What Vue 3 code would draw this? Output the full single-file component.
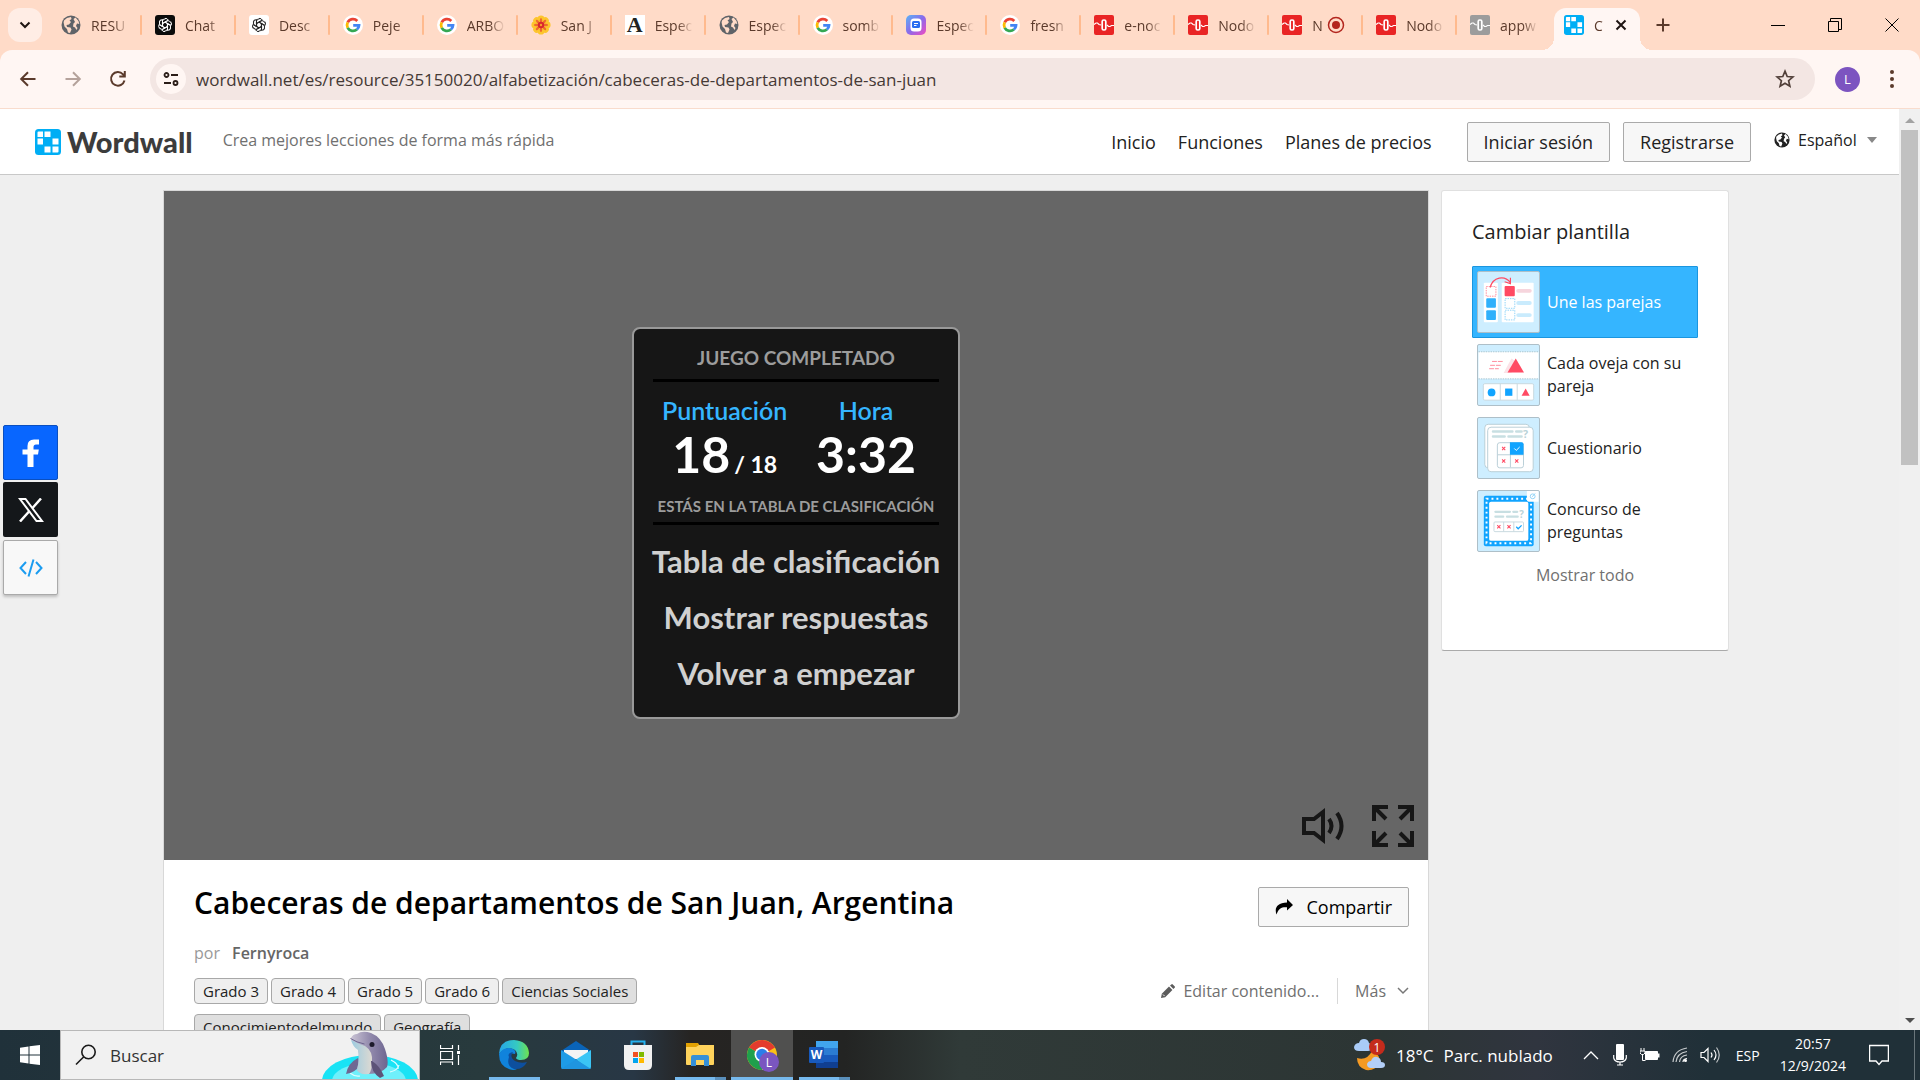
<template>
  <div class="screen">
    <!-- shared symbols -->
    <svg class="symbols" aria-hidden="true">
      <symbol id="i-globe" viewBox="0 0 20 20">
        <circle cx="10" cy="10" r="9.5" fill="currentColor" />
        <path d="M3 5.5 6 3l4-1 .5 2-2 1.500 1.500 1.500-2 2.500-2.500.5.5 2 3.500.5 1 2-1.500 3.500-2-.5-1-3.500-2.500-2.500-.9-4zM12.500 4l2-1.500 3 3.500.8 3-2.300-.5-1 2.500 1.500 2-1 2-1.500-2.500-2-1 .5-3 1.500-1.500z" fill="var(--land, #ffdbc8)" />
      </symbol>
      <symbol id="i-gpt" viewBox="0 0 20 20">
        <rect width="20" height="20" rx="3" fill="var(--tile, #0b0b0b)" />
        <g fill="none" stroke="currentColor" stroke-width="1">
          <path v-for="a in 6" :key="a" :transform="`rotate(${a * 60} 10 10)`" d="M10 7.300 12.600 8.800V13.200a3 3 0 0 1-3.200 3M10 3.400a3.200 3.200 0 0 1 3.300 1.800L9.700 7.300" />
        </g>
      </symbol>
      <symbol id="i-google" viewBox="0 0 20 20">
        <circle cx="10" cy="10" r="10" fill="#fff" />
        <g fill="none" stroke-width="2.800">
          <path d="M14.300 5.900A6 6 0 0 0 4.700 7.300" stroke="#ea4335" />
          <path d="M4.700 7.300a6 6 0 0 0 0 5.500" stroke="#fbbc05" />
          <path d="M4.700 12.800a6 6 0 0 0 9.200 1.700" stroke="#34a853" />
          <path d="M13.900 14.500A6 6 0 0 0 16 10.300H10.200" stroke="#4285f4" />
        </g>
      </symbol>
      <symbol id="i-flower" viewBox="0 0 20 20">
        <g fill="#fdc52c">
          <circle v-for="a in 8" :key="a" :transform="`rotate(${a * 45} 10 10)`" cx="10" cy="3.800" r="3.400" />
        </g>
        <g fill="#ef6a2e">
          <ellipse v-for="a in 8" :key="a" :transform="`rotate(${a * 45} 10 10)`" cx="10" cy="5.500" rx="1.200" ry="2.600" />
        </g>
        <circle cx="10" cy="10" r="3.200" fill="#d9272e" />
        <circle cx="10" cy="10" r="1.200" fill="#f9a02c" />
      </symbol>
      <symbol id="i-app" viewBox="0 0 20 20">
        <linearGradient id="appg" x1="0" y1="0" x2="1" y2="1">
          <stop offset="0" stop-color="#5bb4f5" />
          <stop offset=".5" stop-color="#8a6bea" />
          <stop offset="1" stop-color="#f04bc0" />
        </linearGradient>
        <rect width="20" height="20" rx="5" fill="url(#appg)" />
        <rect x="4.500" y="3.500" width="11" height="13" rx="3.500" fill="#fff" />
        <rect x="6" y="6" width="8" height="7" rx="1.500" fill="#2b6df0" />
        <path d="M8 8.500h4M8 10.500h2.500" stroke="#fff" />
      </symbol>
      <symbol id="i-node" viewBox="0 0 20 20">
        <rect width="20" height="20" rx="2" fill="currentColor" />
        <path d="M0 9.500 2 8h1.500L5 9.500l2 .5M13 10l1.500 1.500H16l1.500-1H20" fill="none" stroke="#fff" stroke-width="1.200" />
        <rect x="8.200" y="5" width="3.600" height="10" rx="1.500" fill="none" stroke="#fff" stroke-width="1.700" />
      </symbol>
      <symbol id="i-wordwall" viewBox="0 0 26 26">
        <rect width="26" height="26" rx="3.500" fill="#00aef5" />
        <path d="M2.500 3.500q0-1 1-1H8V8H2.500zM9.500 2.500h6V8h-6zM2.500 9.500H8v6H2.500zM17.500 9.500h6v6h-6zM9.500 17.500h6v6h-6zM17.500 17.500h6v5q0 1-1 1h-5z" fill="#fff" />
      </symbol>
      <symbol id="i-cross" viewBox="0 0 6 6">
        <path d="M1 1 5 5M5 1 1 5" stroke="#ff4a63" stroke-width="1.300" />
      </symbol>
    </svg>

    <div class="tabstrip">
      <button class="tab-search" aria-label="Buscar pestañas">
        <svg width="12" height="8" viewBox="0 0 12 8"><path d="M1.500 1.500 6 6l4.500-4.500" fill="none" stroke="#1f1512" stroke-width="2" /></svg>
      </button>
      <div class="tabs">
        <button v-for="(tab, i) in tabs" :key="i" class="tab" :class="{ active: tab.active }">
          <span v-if="tab.icon === 'letter'" class="favicon letter">A</span>
          <svg v-else class="favicon" :class="tab.tone" width="20" height="20"><use :href="'#i-' + tab.icon" /></svg>
          <span class="tab-title">{{ tab.title }}</span>
          <svg v-if="tab.recording" class="rec" width="18" height="18" viewBox="0 0 18 18">
            <circle cx="9" cy="9" r="7.500" fill="none" stroke="#b3261e" stroke-width="1.500" /><circle cx="9" cy="9" r="4" fill="#b3261e" />
          </svg>
          <svg v-if="tab.active" class="tab-close" width="12" height="12" viewBox="0 0 12 12"><path d="m1.500 1.500 9 9m0-9-9 9" stroke="#1f1512" stroke-width="2" /></svg>
        </button>
      </div>
      <button class="new-tab" aria-label="Nueva pestaña">
        <svg width="14" height="14" viewBox="0 0 14 14"><path d="M7 .5v13M.5 7h13" stroke="#5b3a2b" stroke-width="2" /></svg>
      </button>
      <div class="window-buttons">
        <button aria-label="Minimizar"><svg width="14" height="14"><path d="M0 7.500h14" stroke="#000" /></svg></button>
        <button aria-label="Restaurar">
          <svg width="14" height="14" fill="none" stroke="#000"><path d="M.5 3.500h10v10H.5zM2.500 3V.5h11v11H11" /></svg>
        </button>
        <button aria-label="Cerrar"><svg width="14" height="14"><path d="m.5.5 13 13m0-13-13 13" stroke="#000" /></svg></button>
      </div>
    </div>

    <div class="toolbar">
      <button class="nav-btn" aria-label="Atrás"><svg width="18" height="18" viewBox="0 0 18 18"><path d="M16.500 9H2.500M9 2.200 2.200 9 9 15.800" /></svg></button>
      <button class="nav-btn off" aria-label="Adelante"><svg width="18" height="18" viewBox="0 0 18 18"><path d="M1.500 9h14M9 2.200 15.800 9 9 15.800" /></svg></button>
      <button class="nav-btn" aria-label="Recargar"><svg width="18" height="18" viewBox="0 0 18 18"><path d="M15.500 10.500A6.800 6.800 0 1 1 14 4.300l1.500 1.500M15.800 1v5.500h-5.500" /></svg></button>
      <div class="omnibox">
        <span class="site-info">
          <svg width="16" height="16" viewBox="0 0 16 16" fill="none" stroke="#2b1d18" stroke-width="1.800"><circle cx="3.500" cy="4" r="2" /><path d="M8 4h7M1 12h7" /><circle cx="12.500" cy="12" r="2" /></svg>
        </span>
        <input v-model="url" type="text" aria-label="Dirección" />
        <svg class="star" width="20" height="20" viewBox="0 0 20 20"><path d="m10 2.200 2.200 5.300 5.700.5-4.300 3.700 1.300 5.600L10 14.300l-4.900 3 1.300-5.600L2.100 8l5.700-.5z" fill="none" stroke="#51403a" stroke-width="1.700" /></svg>
      </div>
      <button class="avatar" aria-label="Perfil">L</button>
      <button class="kebab" aria-label="Menú"><svg width="4" height="18"><circle cx="2" cy="2" r="2" /><circle cx="2" cy="9" r="2" /><circle cx="2" cy="16" r="2" /></svg></button>
    </div>

    <div class="viewport">
      <div class="page">
        <header class="site-header">
          <a class="logo" href="#">
            <svg width="26" height="26"><use href="#i-wordwall" /></svg>
            <span>Wordwall</span>
          </a>
          <span class="tagline">Crea mejores lecciones de forma más rápida</span>
          <nav>
            <a href="#">Inicio</a>
            <a href="#">Funciones</a>
            <a href="#">Planes de precios</a>
          </nav>
          <button class="btn">Iniciar sesión</button>
          <button class="btn">Registrarse</button>
          <label class="language">
            <svg width="16" height="16"><use href="#i-globe" /></svg>
            <select aria-label="Idioma"><option>Español</option></select>
            <svg class="caret" width="10" height="6"><path d="M0 0h10L5 6z" fill="#888" /></svg>
          </label>
        </header>

        <main>
          <section class="activity">
            <div class="game">
              <div class="result">
                <h2>JUEGO COMPLETADO</h2>
                <div class="scores">
                  <div class="score">
                    <span class="score-label">Puntuación</span>
                    <span class="score-value">18<small>/ 18</small></span>
                  </div>
                  <div class="score">
                    <span class="score-label">Hora</span>
                    <span class="score-value">3:32</span>
                  </div>
                </div>
                <p class="rank">ESTÁS EN LA TABLA DE CLASIFICACIÓN</p>
                <button v-for="item in gameMenu" :key="item" class="menu-item">{{ item }}</button>
              </div>
              <div class="game-controls">
                <button aria-label="Sonido">
                  <svg width="42" height="42" viewBox="0 0 42 42" fill="none" stroke="#161616" stroke-width="4">
                    <path d="M2 14h10l9-7v28l-9-7H2z" /><path d="M27 14q5 7 0 14M35 8q9 13 0 26" />
                  </svg>
                </button>
                <button aria-label="Pantalla completa">
                  <svg width="42" height="42" viewBox="0 0 42 42" fill="none" stroke="#161616" stroke-width="4">
                    <path d="M2 16V2h14M2 2l12 12M26 2h14v14M40 2 28 14M2 26v14h14M2 40l12-12M40 26v14H26M40 40 28 28" />
                  </svg>
                </button>
              </div>
            </div>

            <div class="info">
              <div class="title-row">
                <h1>Cabeceras de departamentos de San Juan, Argentina</h1>
                <button class="btn share">
                  <svg width="18" height="16" viewBox="0 0 18 16"><path d="M12 0l6 6-6 5.500V8.200C7 7.800 3.500 9 1.500 15.500-.8 9 2 3.800 12 3.500z" /></svg>
                  Compartir
                </button>
              </div>
              <p class="author">por <a href="#">Fernyroca</a></p>
              <div class="meta-row">
                <div class="tags">
                  <a v-for="tag in tags" :key="tag.name" href="#" class="tag" :class="{ subject: tag.subject }">{{ tag.name }}</a>
                </div>
                <div class="actions">
                  <button class="link-btn">
                    <svg width="14" height="14" viewBox="0 0 14 14"><path d="m0 14 .8-4.200L8 2.600 11.400 6l-7.200 7.200zM9 1.600 10.300.4q.8-.7 1.500 0l1.800 1.800q.8.800 0 1.600L12.400 5z" fill="#5c5c5c" /><path d="m2 10.500 1.600 1.600" stroke="#fff" /></svg>
                    Editar contenido...
                  </button>
                  <button class="link-btn more">
                    Más
                    <svg width="12" height="8" viewBox="0 0 12 8"><path d="m1 1 5 5 5-5" fill="none" stroke="#777" stroke-width="1.500" /></svg>
                  </button>
                </div>
              </div>
            </div>
          </section>

          <aside class="templates">
            <h3>Cambiar plantilla</h3>
            <button class="template selected">
              <svg class="thumb" viewBox="0 0 62 62">
                <rect x="5.500" y="11" width="14.500" height="41" rx="1" fill="#fff" /><rect x="24" y="11" width="33" height="41" rx="1" fill="#fff" />
                <path d="M12 16C15 5 27 3 33 11M33 6v6l-6-2" fill="none" stroke="#ff4a63" stroke-width="1.200" />
                <rect x="8" y="15" width="10" height="10" fill="none" stroke="#ff8a9a" stroke-dasharray="1.500 1" />
                <rect x="8" y="27" width="10" height="10" rx="1" fill="#2fb0fb" /><rect x="8" y="39.500" width="10" height="10" rx="1" fill="#2fb0fb" />
                <rect x="27" y="14.500" width="10.500" height="10.500" rx="1" fill="#ff4a63" />
                <g fill="none" stroke="#8fd3f8" stroke-dasharray="1.500 1"><rect x="27.500" y="27.500" width="10" height="10" /><rect x="27.500" y="39.500" width="10" height="10" /></g>
                <path d="M41 19.500h12" stroke="#f6d5dd" stroke-width="4" stroke-linecap="round" /><path d="M41 32h12M41 44.500h12" stroke="#c9ebfd" stroke-width="4" stroke-linecap="round" />
              </svg>
              <span>Une las parejas</span>
            </button>
            <button class="template">
              <svg class="thumb" viewBox="0 0 62 62">
                <rect y="7" width="62" height="28" fill="#fff" /><path d="M0 7h62M0 35h62" stroke="#a8c5cf" stroke-dasharray="1.500 1" />
                <path d="M26 29 34 14l5 3-5 12z" fill="#fbe2e7" /><path d="m30 28.500 8.500-14.500L47 28.500z" fill="#ff4a63" />
                <path d="M14 17h12M12 21h12M11 24.500h10" stroke="#ff8a9a" stroke-dasharray="5 1" />
                <rect x="5" y="40" width="52" height="17" rx="1.500" fill="#fff" stroke="#c8d9df" /><path d="M22.500 40v17M40 40v17" stroke="#c8d9df" />
                <circle cx="13.500" cy="49" r="4" fill="#11a4ff" /><rect x="27.500" y="45" width="7.500" height="7.500" fill="#11a4ff" /><path d="m44.500 52.500 4.200-7.500 4.200 7.500z" fill="#ff4a63" />
              </svg>
              <span>Cada oveja con su pareja</span>
            </button>
            <button class="template">
              <svg class="thumb" viewBox="0 0 62 62">
                <rect x="6.500" y="6.500" width="46" height="45" rx="3.500" fill="#fff" stroke="#b9ced7" /><rect x="9.500" y="9.500" width="47" height="46" rx="3.500" fill="#fff" stroke="#b9ced7" />
                <path d="M15 14h20M39 14h5.500M15 19h12M31 19h13.500" stroke="#c8dfe2" stroke-width="2.600" stroke-linecap="round" />
                <text x="46" y="21" font-size="11">?</text>
                <rect x="19.500" y="25.500" width="27" height="26" rx="2.500" fill="#fff" stroke="#b9ced7" /><path d="M33 25v26M20 38h26" stroke="#b9ced7" />
                <path d="M32.500 25h12q2 0 2 2v11h-14z" fill="#11a4ff" /><path d="m37 31.500 2 2 3.500-3.500" fill="none" stroke="#fff" />
                <use href="#i-cross" x="23.500" y="29" width="5" height="5" /><use href="#i-cross" x="23.500" y="42" width="5" height="5" /><use href="#i-cross" x="37" y="42" width="5" height="5" />
              </svg>
              <span>Cuestionario</span>
            </button>
            <button class="template">
              <svg class="thumb" viewBox="0 0 62 62">
                <rect x="5.500" y="5" width="51.500" height="52" rx="2" fill="#11a4ff" />
                <rect x="8.300" y="8" width="46" height="46" fill="none" stroke="#fff" stroke-width="2" stroke-dasharray="2 3.110" />
                <rect x="11" y="11" width="40.500" height="40.500" rx="2" fill="#fff" />
                <path d="M17.500 21.500h15M36 21.500h4M17.500 26.500h8M29.500 26.500h11" stroke="#c8dfe2" stroke-width="2.400" stroke-linecap="round" />
                <text x="42" y="28" font-size="10">?</text>
                <rect x="16" y="32" width="30.500" height="10" rx="1" fill="#fff" stroke="#c8d9df" /><path d="M26 32v10M36.500 32v10" stroke="#c8d9df" />
                <use href="#i-cross" x="18.500" y="34.500" width="5" height="5" /><use href="#i-cross" x="29" y="34.500" width="5" height="5" /><path d="m39 37 2 2 3.500-3.500" fill="none" stroke="#11a4ff" stroke-width="1.300" />
                <path d="M50 0h12v11H52q-2 0-2-2z" fill="#fff" /><circle cx="56" cy="5.500" r="2.500" fill="none" stroke="#8fd3f8" /><path d="m55.500 6 3-3.500" stroke="#8fd3f8" />
              </svg>
              <span>Concurso de preguntas</span>
            </button>
            <a class="show-all" href="#">Mostrar todo</a>
          </aside>
        </main>
      </div>

      <div class="scrollbar">
        <svg width="10" height="5"><path d="M0 5h10L5 0z" fill="#a3a3a3" /></svg>
        <div class="track"><div class="thumb-bar"></div></div>
        <svg width="10" height="5"><path d="M0 0h10L5 5z" fill="#505050" /></svg>
      </div>

      <div class="share-bar">
        <button class="fb" aria-label="Facebook"><svg width="18" height="28" viewBox="0 0 18 28"><path d="M5.500 28V15.500H.5v-5h5V7q0-6.500 6.500-6.500h5v5h-3q-2.500 0-2.500 2.500v2.500h5.300l-.8 5h-4.500V28z" fill="#fff" /></svg></button>
        <button class="tw" aria-label="X"><svg width="26" height="24" viewBox="0 0 26 24"><path d="M2 1h5.500L24 23h-5.500z" fill="none" stroke="#fff" stroke-width="2" /><path d="M23 .5 14.500 10M2 23.500 11.500 13" stroke="#fff" stroke-width="2.500" /></svg></button>
        <button class="embed" aria-label="Insertar"><svg width="24" height="18" viewBox="0 0 24 18" fill="none" stroke="#1b9cf0" stroke-width="2"><path d="M7 3 1.500 9 7 15M17 3l5.500 6-5.500 6M14.500.5l-5 17" /></svg></button>
      </div>
    </div>

    <div class="taskbar">
      <button class="start" aria-label="Inicio"><svg width="20" height="20" viewBox="0 0 20 20"><path d="M0 2.800 8.500 1.500v8H0zM9.500 1.300 20 0v9.500H9.500zM0 10.500h8.500v8L0 17.300zM9.500 10.500H20V20L9.500 18.700z" fill="#fff" /></svg></button>
      <label class="search">
        <svg width="22" height="22" viewBox="0 0 22 22" fill="none" stroke="#1a1a1a" stroke-width="1.600"><circle cx="13.500" cy="8" r="6.700" /><path d="M8.800 12.800 1 20.500" /></svg>
        <input type="text" placeholder="Buscar" aria-label="Buscar" />
        <svg class="dolphin" width="96" height="48" viewBox="0 0 96 48">
          <defs>
            <linearGradient id="skin" x1="0" x2="1"><stop offset="0" stop-color="#c9c3d4" /><stop offset=".5" stop-color="#948cae" /><stop offset="1" stop-color="#6d6590" /></linearGradient>
            <linearGradient id="belly" x1="0" x2="1"><stop offset="0" stop-color="#9ccbe0" /><stop offset="1" stop-color="#ddd9d2" /></linearGradient>
          </defs>
          <ellipse cx="48" cy="50" rx="48" ry="26" fill="#19e3f5" /><ellipse cx="47" cy="50" rx="37" ry="18" fill="#6ff0fb" />
          <path d="M69 29q8 4 7 9M68 41q8-2 9-7M28 42q5 4 10 3" fill="none" stroke="#dffcff" stroke-width="1.200" />
          <path d="M36 27q-10 5-12 16 9-1 14-9z" fill="#6f6893" />
          <path d="M29 7Q31 3 35 3q5-4 14-1 10 4 14 16 4 12 2 18-6 7-18 7-10 0-12-4 3-12 1-21-5-3-7-11z" fill="url(#skin)" />
          <path d="M29 9q8 4 14 6 8 5 7 16 0 8-3 12-10 1-12-4 3-12 1-20-5-3-7-10z" fill="url(#belly)" />
          <path d="M50 30q8 5 12 15l-4 2q-9-6-9-17z" fill="#5d5378" />
          <circle cx="50" cy="13.500" r="2.500" fill="#1c1a2b" /><path d="M28.500 7.500q6 4 14 5.500" stroke="#6d6590" fill="none" />
        </svg>
      </label>
      <button class="app task-view" aria-label="Vista de tareas"><svg width="20" height="20" fill="none" stroke="#fff"><path d="M.5 0v3.500h12V0M.5 6.500h12v8H.5zM.5 20v-3h12v3M18.500 0v5M18.500 10v10" stroke-width="1.200" /><path d="M17 6h3v3h-3z" fill="#fff" stroke="none" /></svg></button>
      <button class="app running" aria-label="Edge">
        <svg width="30" height="30" viewBox="0 0 30 30">
          <defs><linearGradient id="edge1" x1="0" x2="1"><stop offset="0" stop-color="#26a6e8" /><stop offset=".6" stop-color="#35c9c2" /><stop offset="1" stop-color="#6fe34e" /></linearGradient></defs>
          <path d="M0 14Q1 0 15 0q14 1 15 13 0 7-8 7-4 0-5-2 3-4-1-8Q8 5 0 14z" fill="url(#edge1)" />
          <path d="M0 14q4-7 11-6 7 2 5 6-5-2-6 3 0 9 8 12-2 1-4 1Q0 28 0 14z" fill="#1083dc" />
          <path d="M10 17q-2-4 4-5-4 5 2 9 6 3 12 1-4 8-13 7-8-3-5-12z" fill="#0d4f9e" />
        </svg>
      </button>
      <button class="app" aria-label="Correo">
        <svg width="30" height="30" viewBox="0 0 30 30"><path d="M0 11 15 1l15 10v4H0z" fill="#0a64b8" /><path d="M3 10h24v9H3z" fill="#f4f4f4" /><path d="M0 10 30 29H2q-2 0-2-2z" fill="#1e9be6" /><path d="M30 10v17q0 2-2 2L15 19.500z" fill="#3bc5f5" /><path d="M0 29h30L15 19.500z" fill="#1f95e0" /></svg>
      </button>
      <button class="app" aria-label="Tienda">
        <svg width="30" height="30" viewBox="0 0 30 30"><path d="M8.500 6V1.500h13V6" fill="none" stroke="#25b1ee" stroke-width="2" /><path d="M1 5h28v20q0 5-5 5H6q-5 0-5-5z" fill="#f1f1f1" /><path d="M10 12h5v5h-5z" fill="#f25022" /><path d="M16 12h5v5h-5z" fill="#7fba00" /><path d="M10 18h5v5h-5z" fill="#00a4ef" /><path d="M16 18h5v5h-5z" fill="#ffb900" /></svg>
      </button>
      <button class="app running stacked" aria-label="Explorador">
        <svg width="30" height="30" viewBox="0 0 30 30"><path d="M1 3h12l2 3v4H1z" fill="#e2a102" /><path d="M1 7h10l3-2h15v19q0 1-1 1H2q-1 0-1-1z" fill="#ffd35c" /><path d="M6 26V17q0-2 2-2h14q2 0 2 2v9h-5v-6h-8v6z" fill="#3690d8" /></svg>
      </button>
      <button class="app running current" aria-label="Chrome">
        <svg width="34" height="34" viewBox="0 0 34 34">
          <circle cx="17" cy="17" r="15" fill="#fbc116" /><path d="M17 17 4 9.500Q9 2 17 2t13 7.500z" fill="#e33b2e" /><path d="M17 17 4 9.500Q-1 19 6 27q5 5 11 5z" fill="#1fa04c" />
          <circle cx="17" cy="16.500" r="7.500" fill="#fff" /><circle cx="17" cy="16.500" r="5.800" fill="#2b7de9" />
          <circle cx="24" cy="24" r="10" fill="#7a56c0" /><text x="24" y="28.500" text-anchor="middle" font-size="12" fill="#fff" font-family="Open Sans, sans-serif">L</text>
        </svg>
      </button>
      <button class="app running stacked" aria-label="Word">
        <svg width="30" height="30" viewBox="0 0 30 30"><path d="M7 1h22v7H7z" fill="#41a5ee" /><path d="M7 8h22v7H7z" fill="#2b7cd3" /><path d="M7 15h22v7H7z" fill="#185abd" /><path d="M7 22h22v6H7z" fill="#103f91" /><rect y="7" width="15" height="16" rx="1" fill="#185abd" /><text x="7.500" y="19" text-anchor="middle" font-size="12" font-weight="700" fill="#fff" font-family="Open Sans, sans-serif">W</text></svg>
      </button>
      <div class="tray">
        <svg class="weather" width="32" height="34" viewBox="0 0 32 34">
          <path d="M3 20q10 3 15-7 10 4 7 13-4 7-13 6Q3 29 3 20z" fill="#f59a23" /><path d="M5 13q-5 0-5-4 1-4 5-4Q6 1 10 1q4 0 5 4 3 1 3 5-1 3-4 3z" fill="#a9cbf7" /><path d="M17 30q-4 0-4-4 1-3 4-3 2-5 6-4 4 1 4 5 4 0 4 3t-4 3z" fill="#b3cff8" />
          <circle cx="23" cy="9" r="8" fill="#c42b1c" /><text x="23" y="13.500" text-anchor="middle" font-size="12" fill="#fff" font-family="Open Sans, sans-serif">1</text>
        </svg>
        <span class="forecast"><span>18°C</span><span>Parc. nublado</span></span>
        <svg class="up" width="16" height="10"><path d="m1 9 7-7 7 7" fill="none" stroke="#fff" stroke-width="1.300" /></svg>
        <svg class="mic" width="14" height="22"><rect x="3" width="8" height="16" rx="1" fill="#fff" /><path d="M.7 11v3q1 4 6.300 4t6.300-4v-3M7 18v3M4 21h6" fill="none" stroke="#fff" stroke-width="1.200" /></svg>
        <svg width="20" height="14"><path d="M5.500 3.500h12v8h-12z" fill="#fff" stroke="#fff" /><path d="M18.500 5.500v4" stroke="#fff" stroke-width="2" /><path d="M1 0v3M4 0v3M0 3h5v2L3.500 6.500h-2L0 5zM2.500 7v5.500h3" stroke="#fff" fill="none" /></svg>
        <svg width="16" height="16" fill="none" stroke="#fff" stroke-width="1.200"><path d="M1 15Q2 3 15 1M4 15Q5 6 15 4.500M7.500 15Q8 9 15 8" opacity=".75" /><path d="M11 15q0-3 4-3.500" /><circle cx="13.500" cy="13.500" r="1.500" fill="#fff" stroke="none" /></svg>
        <svg width="20" height="18" fill="none" stroke="#fff" stroke-width="1.200"><path d="M1 6.500h3l4-4v13l-4-4H1zM11 6.500q2 2.500 0 5M14 4q4 5 0 10" /><path d="M16.500 1.500q5.500 7.500 0 15" opacity=".7" /></svg>
        <span class="lang">ESP</span>
        <span class="clock"><span>20:57</span><span>12/9/2024</span></span>
        <svg width="20" height="22"><path d="M.6 1.500h18.800v15.500H13l-3 3.500-3-3.500H.6z" fill="none" stroke="#fff" stroke-width="1.300" /></svg>
        <span class="desktop-edge"></span>
      </div>
    </div>
  </div>
</template>

<script setup>
import { ref } from 'vue';

const url = ref('wordwall.net/es/resource/35150020/alfabetización/cabeceras-de-departamentos-de-san-juan');

const tabs = [
  { title: 'RESU', icon: 'globe', tone: 'gray' },
  { title: 'Chat', icon: 'gpt', tone: 'dark' },
  { title: 'Desc', icon: 'gpt', tone: 'light' },
  { title: 'Peje', icon: 'google' },
  { title: 'ARBO', icon: 'google' },
  { title: 'San J', icon: 'flower' },
  { title: 'Espec', icon: 'letter' },
  { title: 'Espec', icon: 'globe', tone: 'gray' },
  { title: 'somb', icon: 'google' },
  { title: 'Espec', icon: 'app' },
  { title: 'fresn', icon: 'google' },
  { title: 'e-noc', icon: 'node', tone: 'red' },
  { title: 'Nodo', icon: 'node', tone: 'red' },
  { title: 'N', icon: 'node', tone: 'red', recording: true },
  { title: 'Nodo', icon: 'node', tone: 'red' },
  { title: 'appw', icon: 'node', tone: 'silver' },
  { title: 'C', icon: 'wordwall', active: true },
];

const gameMenu = ['Tabla de clasificación', 'Mostrar respuestas', 'Volver a empezar'];

const tags = [
  { name: 'Grado 3' },
  { name: 'Grado 4' },
  { name: 'Grado 5' },
  { name: 'Grado 6' },
  { name: 'Ciencias Sociales', subject: true },
  { name: 'Conocimientodelmundo', subject: true },
  { name: 'Geografía', subject: true },
];
</script>

<style>
body {
  margin: 0;
  overflow: hidden;
}
</style>

<style scoped>
* {
  box-sizing: border-box;
}

.screen {
  display: flex;
  flex-direction: column;
  height: 100vh;
  font-family: "Open Sans", "Noto Sans", sans-serif;
  font-size: 16px;
  color: #222;
}

button {
  display: flex;
  align-items: center;
  justify-content: center;
  padding: 0;
  border: 0;
  background: none;
  font: inherit;
  color: inherit;
}

a {
  color: inherit;
  text-decoration: none;
}

h1, h2, h3, p {
  margin: 0;
}

svg {
  flex: none;
}

.symbols {
  position: absolute;
  width: 0;
  height: 0;
}

/* tab strip */
.tabstrip {
  display: flex;
  flex: none;
  height: 50px;
  background: #ffdbc8;
}

.tab-search {
  width: 34px;
  height: 34px;
  margin: 8px 5px 8px 8px;
  border-radius: 12px;
  background: #ffede5;
}

.tabs {
  display: flex;
  flex: 1;
  min-width: 0;
}

.tab {
  position: relative;
  flex: 1;
  min-width: 0;
  justify-content: flex-start;
  padding: 0 12px 0 14px;
  font-size: 14px;
  color: #5b3a2b;
}

.tab::after {
  content: "";
  position: absolute;
  right: -1px;
  top: 15px;
  width: 2px;
  height: 20px;
  border-radius: 1px;
  background: #ffba8e;
}

.tab:nth-last-child(2)::after {
  display: none;
}

.favicon {
  margin-right: 10px;
}

.letter {
  width: 20px;
  background: #fff;
  font: 700 22px/20px "Liberation Serif", serif;
  color: #222;
}

.gray {
  color: #5f6368;
}

.dark {
  color: #fff;
}

.light {
  color: #222;
  --tile: #fff;
}

.red {
  color: #e92525;
}

.silver {
  color: #9c9c9c;
}

.tab-title {
  flex: 1;
  min-width: 0;
  overflow: hidden;
  white-space: nowrap;
  text-align: left;
  mask-image: linear-gradient(90deg, #000 60%, transparent);
}

.rec {
  margin-right: 5px;
}

.tab.active {
  flex: 0 0 86px;
  height: 42px;
  margin: 8px 4px 0;
  padding: 0 13px 8px 10px;
  border-radius: 12px 12px 0 0;
  background: #fff6f3;
}

.tab.active::before,
.tab.active::after {
  content: "";
  position: absolute;
  top: auto;
  bottom: 0;
  width: 12px;
  height: 12px;
  border-radius: 0;
  background: radial-gradient(circle at 0 0, transparent 12px, #fff6f3 12px);
}

.tab.active::before {
  left: -12px;
}

.tab.active::after {
  right: -12px;
  background: radial-gradient(circle at 100% 0, transparent 12px, #fff6f3 12px);
}

.new-tab {
  width: 105px;
  padding-left: 12px;
  justify-content: flex-start;
}

.window-buttons {
  display: flex;
}

.window-buttons button {
  width: 57px;
}

/* toolbar */
.toolbar {
  display: flex;
  flex: none;
  align-items: center;
  height: 59px;
  padding: 0 8px 0 5px;
  border-bottom: 1px solid #f9dccd;
  border-radius: 12px 12px 0 0;
  background: #fff6f3;
  box-shadow: 0 -12px 0 0 #ffdbc8;
  clip-path: inset(0);
}

.nav-btn {
  width: 45px;
  height: 40px;
}

.nav-btn path {
  fill: none;
  stroke: #5b3a2b;
  stroke-width: 2;
}

.nav-btn.off path {
  stroke: #b5a29b;
}

.omnibox {
  display: flex;
  flex: 1;
  align-items: center;
  height: 42px;
  margin-left: 10px;
  padding: 0 20px 0 6px;
  border-radius: 21px;
  background: #f3e6e3;
}

.site-info {
  display: flex;
  align-items: center;
  justify-content: center;
  width: 30px;
  height: 30px;
  border-radius: 50%;
  background: #fff6f3;
}

.omnibox input {
  flex: 1;
  margin: 0 10px;
  padding: 0;
  border: 0;
  background: none;
  font: 17px "Open Sans", "Noto Sans", sans-serif;
  color: #453935;
}

.avatar {
  width: 25px;
  height: 25px;
  margin: 0 12px 0 20px;
  border-radius: 50%;
  background: #7c54c0;
  font-size: 13px;
  color: #fff;
}

.kebab {
  width: 40px;
  height: 40px;
  fill: #5b3a2b;
}

/* page */
.viewport {
  position: relative;
  display: flex;
  flex: 1;
  min-height: 0;
  overflow: hidden;
  background: #efefef;
}

.page {
  flex: 1;
  min-width: 0;
}

.site-header {
  display: flex;
  align-items: center;
  height: 66px;
  padding: 0 22px 0 35px;
  border-bottom: 1px solid #c8c8c8;
  background: #fff;
}

.logo {
  display: flex;
  align-items: center;
  gap: 6px;
  font: 900 29px/34px Lato, sans-serif;
  color: #3c3c3c;
}

.tagline {
  margin-left: 30px;
  padding-bottom: 4px;
  color: #707070;
}

nav {
  display: flex;
  gap: 22px;
  margin-left: auto;
  margin-right: 22px;
  font-size: 18px;
}

.btn {
  height: 40px;
  margin-left: 13px;
  padding: 0 16px;
  border: 1px solid #aaa;
  border-radius: 2px;
  background: #f7f7f7;
  font-size: 18px;
}

.language {
  display: flex;
  align-items: center;
  margin-left: 23px;
  padding-bottom: 3px;
  --land: #fff;
}

.language select {
  margin: 0 10px 0 8px;
  padding: 0;
  border: 0;
  appearance: none;
  background: none;
  font: inherit;
  color: #222;
}

main {
  display: flex;
  align-items: flex-start;
  gap: 12px;
  padding: 15px 170px 0 163px;
}

.activity {
  flex: 1;
  min-width: 0;
  border: 1px solid #d8d8d8;
  background: #fff;
}

.game {
  position: relative;
  display: flex;
  align-items: center;
  justify-content: center;
  aspect-ratio: 1264 / 669;
  padding-bottom: 6px;
  background: #666;
}

.result {
  display: flex;
  flex-direction: column;
  width: 328px;
  height: 392px;
  padding: 14px 19px 12px;
  border: 2px solid #999;
  border-radius: 8px;
  background: #161616;
  font-family: Lato, "Open Sans", sans-serif;
  font-weight: 600;
  text-align: center;
  white-space: nowrap;
}

.result > * {
  flex: none;
}

.result h2 {
  height: 39px;
  border-bottom: 3px solid #000;
  font-size: 19px;
  font-weight: 700;
  line-height: 30px;
  color: #9c9c9c;
}

.scores {
  display: flex;
  justify-content: space-between;
  padding: 12px 23px 0 9px;
}

.score {
  display: flex;
  flex-direction: column;
}

.score-label {
  font-size: 25px;
  line-height: 32px;
  color: #35b5ff;
}

.score-value {
  font-size: 50px;
  font-weight: 700;
  line-height: 56px;
  color: #fff;
}

.score-value small {
  margin-left: 4px;
  font-size: 23px;
  line-height: 24px;
}

.rank {
  height: 43px;
  margin-bottom: 8px;
  border-bottom: 3px solid #000;
  font-size: 15px;
  font-weight: 700;
  line-height: 48px;
  color: #9c9c9c;
}

.menu-item {
  height: 56px;
  font-size: 31px;
  font-weight: 700;
  color: #d0d0d0;
}

.game-controls {
  position: absolute;
  right: 14px;
  bottom: 13px;
  display: flex;
  gap: 28px;
}

.info {
  padding: 27px 19px 20px 30px;
}

.title-row {
  display: flex;
  justify-content: space-between;
}

h1 {
  font-size: 30px;
  font-weight: 600;
  line-height: 32px;
  color: #000;
}

.share {
  gap: 13px;
  color: #000;
}

.author {
  margin-top: 14px;
  line-height: 24px;
  color: #999;
}

.author a {
  margin-left: 8px;
  font-weight: 600;
  color: #666;
}

.meta-row {
  display: flex;
  align-items: flex-start;
  justify-content: space-between;
  margin-top: 13px;
}

.tags {
  display: flex;
  flex-wrap: wrap;
  gap: 10px 3px;
  width: 450px;
}

.tag {
  height: 26px;
  padding: 0 8px;
  border: 1px solid #a8a8a8;
  border-radius: 4px;
  background: #efefef;
  font-size: 15px;
  line-height: 24px;
}

.tag.subject {
  background: #dfdfdf;
}

.actions {
  display: flex;
}

.link-btn {
  gap: 8px;
  height: 26px;
  color: #707070;
}

.more {
  gap: 11px;
  margin-left: 18px;
  padding-left: 17px;
  border-left: 1px solid #d8d8d8;
}

/* template picker */
.templates {
  display: flex;
  flex-direction: column;
  flex: none;
  width: 288px;
  min-height: 461px;
  padding: 29px 30px;
  border: 1px solid #e0e0e0;
  border-bottom-color: #aaa;
  border-radius: 3px;
  background: #fff;
}

h3 {
  margin-bottom: 22px;
  font-size: 20px;
  font-weight: 400;
  line-height: 24px;
}

.template {
  justify-content: flex-start;
  gap: 7px;
  height: 72px;
  margin-bottom: 1px;
  padding: 0 4px;
  border: 1px solid transparent;
  line-height: 23px;
  text-align: left;
}

.selected {
  border-color: #1b96df;
  border-radius: 1px;
  background: #35b5ff;
  color: #fff;
}

.thumb {
  width: 63px;
  height: 62px;
  border: 1px solid #aebfc8;
  border-radius: 2px;
  background: #ceeeff;
}

.thumb text {
  fill: #b9d3d8;
  font-weight: 700;
}

.show-all {
  margin-top: 5px;
  line-height: 24px;
  text-align: center;
  color: #707070;
}

.scrollbar {
  display: flex;
  flex-direction: column;
  align-items: center;
  justify-content: space-between;
  width: 21px;
  padding: 9px 0 7px;
  background: #f0f0f0;
}

.track {
  flex: 1;
  margin: 7px 0;
  width: 17px;
}

.thumb-bar {
  height: 38%;
  background: #c1c1c1;
}

/* floating share buttons */
.share-bar {
  position: absolute;
  left: 3px;
  top: 316px;
  display: flex;
  flex-direction: column;
  gap: 2px;
}

.share-bar button {
  width: 55px;
  height: 55px;
  border-radius: 2px;
}

.fb {
  border: 1px solid #0a4fc0;
  background: #0866ff;
}

.tw {
  background: #14171a;
}

.share-bar .embed {
  margin-top: 1px;
  border: 1px solid #aaa;
  background: #f8f8f8;
  box-shadow: 0 2px 3px rgba(0, 0, 0, 0.2);
}

/* taskbar */
.taskbar {
  display: flex;
  flex: none;
  height: 50px;
  background: linear-gradient(90deg, #20313a 0, #283a3d 25%, #283745 33%, #262422 36%, #232423 44%, #303a38 50%, #2c3534 72%, #30353f 80%, #203038 89%, #203038 100%);
  color: #fff;
}

.start {
  width: 60px;
}

.search {
  position: relative;
  display: flex;
  align-items: center;
  gap: 13px;
  width: 360px;
  padding-left: 14px;
  border: 1px solid #b8b8b8;
  background: #f1f1f1;
}

.search input {
  width: 200px;
  padding: 0;
  border: 0;
  background: none;
  font: 17px "Open Sans", "Noto Sans", sans-serif;
  color: #222;
}

.search input::placeholder {
  color: #333;
}

.dolphin {
  position: absolute;
  right: 1px;
  bottom: 0;
}

.app {
  position: relative;
  width: 62px;
}

.task-view {
  width: 63px;
  padding-right: 3px;
}

.running::after {
  content: "";
  position: absolute;
  left: 6px;
  right: 5px;
  bottom: 0;
  height: 3px;
  background: #76b9ed;
}

.stacked::after {
  background: linear-gradient(90deg, #76b9ed 78%, #5a8fbb 78%);
}

.current {
  background: #50504f;
}

.current::after {
  left: 0;
  right: 0;
}

.tray {
  display: flex;
  align-items: center;
  gap: 12px;
  margin-left: auto;
}

.weather {
  margin-right: -2px;
}

.forecast {
  display: flex;
  gap: 10px;
  margin-right: 18px;
  font-size: 17px;
}

.up {
  margin-right: 2px;
}

.mic {
  margin-right: 1px;
}

.lang {
  margin: 0 8px 0 4px;
  font-size: 14px;
}

.clock {
  display: flex;
  flex-direction: column;
  margin-right: 11px;
  font-size: 14px;
  line-height: 22px;
  text-align: center;
}

.desktop-edge {
  width: 6px;
  height: 50px;
  margin-left: 13px;
  border-left: 1px solid #6a767b;
}
</style>
